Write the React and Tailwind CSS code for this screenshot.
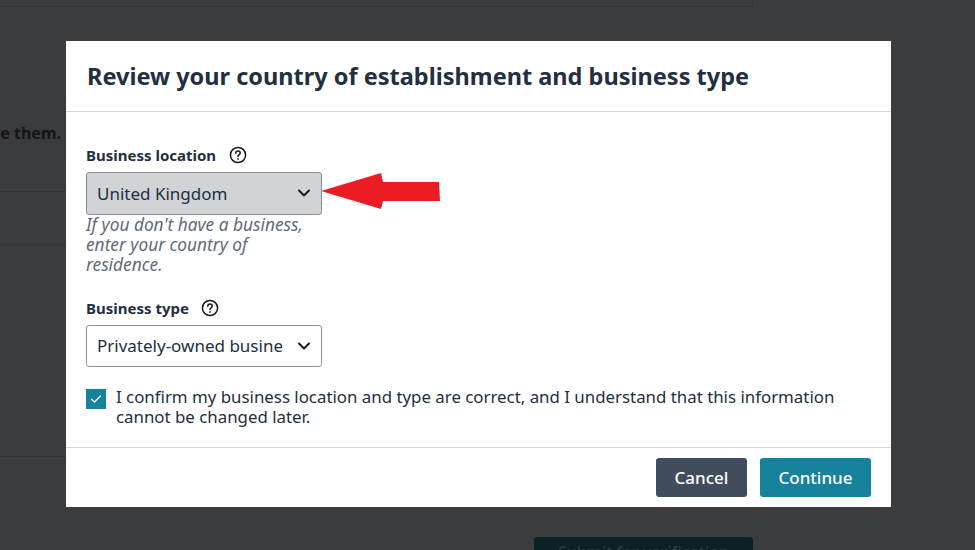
import React from "react";

const Help = () => (
  <svg width="18" height="18" viewBox="0 0 18 18" fill="none" stroke="#16191f" strokeWidth="1.5" strokeLinecap="round" strokeLinejoin="round">
    <circle cx="9" cy="9" r="7.6" />
    <path d="M6.8 7.2c0-1.3 1-2.1 2.2-2.1s2.2.8 2.2 2c0 1.7-2.2 1.7-2.2 3.3" />
    <path d="M9 12.8v.4" />
  </svg>
);

const Chevron = () => (
  <svg width="14" height="9" viewBox="0 0 14 9" fill="none" stroke="#16191f" strokeWidth="2" strokeLinecap="round" strokeLinejoin="round">
    <path d="M2 1.5 7 6.5l5-5" />
  </svg>
);

const Field = ({ label, value, gray, gap }) => (
  <div className="flex flex-col">
    <div className={`flex items-center ${gap} h-[20px]`}>
      <span className="text-[15px] font-bold text-[#232f3e] leading-[20px]">{label}</span>
      <Help />
    </div>
    <div className={`mt-[7px] w-[236px] flex items-center justify-between pl-[10px] pr-[10px] rounded-[3px] border border-[#8b9096] ${gray ? "bg-[#d1d3d7] h-[43px]" : "bg-white h-[42px]"}`}>
      <span className="text-[17px] text-[#232f3e] w-[185px] overflow-hidden whitespace-nowrap">{value}</span>
      <Chevron />
    </div>
  </div>
);

export default function App() {
  return (
    <div className="relative w-[975px] h-[550px] overflow-hidden bg-[#3b3c3e]" style={{ fontFamily: '"Noto Sans", sans-serif' }}>
      <div className="absolute left-0 top-0 w-[753px] h-[7px] border-b border-r border-[#333436]" />
      <div className="absolute left-0 top-[97px] w-[66px] h-[60px] bg-[#393b3e]" />
      <div className="absolute right-[914px] top-[122px] text-[16px] font-bold text-[#141516] leading-[22px] whitespace-nowrap">e them.</div>
      <div className="absolute left-0 top-[191px] w-[66px] border-t border-[#333436]" />
      <div className="absolute left-0 top-[244px] w-[66px] h-[2px] bg-[#37383a]" />
      <div className="absolute left-0 top-[456px] w-[66px] border-t border-[#333436]" />
      <div className="absolute left-[534px] top-[537px] w-[219px] h-[30px] rounded-[3px] bg-[#0b2126] text-center text-[16px] font-medium text-[#2b3a3e] leading-[30px]">Submit for verification</div>

      <div className="absolute left-[66px] top-[41px] w-[825px] h-[466px] bg-white flex flex-col">
        <div className="h-[71px] border-b border-[#d5d6d8] pl-[21px] pt-[19px]">
          <h1 className="text-[23.5px] font-bold text-[#232f3e] leading-[33px] whitespace-nowrap">Review your country of establishment and business type</h1>
        </div>

        <div className="flex-1 pl-[20px] pr-[20px] pt-[33px] flex flex-col">
          <div className="flex items-start">
            <div className="relative">
              <Field label="Business location" value="United Kingdom" gray gap="gap-[13px]" />
              <svg className="absolute left-[235px] top-[25px]" width="120" height="40" viewBox="0 0 120 40">
                <path d="M0 21 L60 3 L62 12 L118 12 L119 31 L62 31 L60 39 Z" fill="#ec1c24" />
              </svg>
            </div>
          </div>
          <p className="w-[226px] text-[17.3px] italic text-[#5f6b7a] leading-[20px]">If you don't have a business, enter your country of residence.</p>

          <div className="mt-[23px]">
            <Field label="Business type" value="Privately-owned business" gap="gap-[12px]" />
          </div>

          <div className="mt-[20px] flex items-start gap-[10px]">
            <div className="mt-[2px] w-[20px] h-[20px] bg-[#16829c] flex items-center justify-center shrink-0">
              <svg width="12" height="10" viewBox="0 0 12 10" fill="none" stroke="#fff" strokeWidth="1.2" strokeLinecap="round" strokeLinejoin="round">
                <path d="M1.5 5.2 4.5 8l6-6" />
              </svg>
            </div>
            <p className="w-[730px] text-[16.85px] text-[#232f3e] leading-[20px]">I confirm my business location and type are correct, and I understand that this information cannot be changed later.</p>
          </div>
        </div>

        <div className="h-[60px] border-t border-[#d5d6d8] flex items-start justify-end gap-[13px] pr-[20px] pt-[10px]">
          <button className="w-[91px] h-[39px] rounded-[3px] bg-[#414d5c] text-white text-[17px] font-medium">Cancel</button>
          <button className="w-[111px] h-[39px] rounded-[3px] bg-[#16829c] text-white text-[17px] font-medium">Continue</button>
        </div>
      </div>
    </div>
  );
}
